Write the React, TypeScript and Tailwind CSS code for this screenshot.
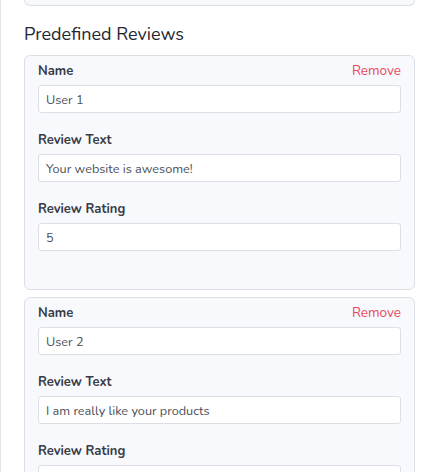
const reviews = [
  { name: "User 1", text: "Your website is awesome!", rating: "5" },
  { name: "User 2", text: "I am really like your products", rating: "" },
];

function Field({ label, value, remove }: { label: string; value: string; remove?: boolean }) {
  return (
    <div className="mb-[17px]">
      <div className="flex items-center justify-between h-5 mb-1">
        <span className="text-[13px] leading-5 font-bold text-[#373b46]">{label}</span>
        {remove && <span className="text-[13.5px] leading-5 text-[#e8485f] cursor-pointer">Remove</span>}
      </div>
      <input
        readOnly
        value={value}
        className="block w-full h-[28px] px-[7px] text-[12.7px] text-[#4b5059] bg-white border border-[#dcdfe5] rounded-[3px] outline-none"
      />
    </div>
  );
}

export default function App() {
  return (
    <div
      className="min-h-[472px] border-l border-[#e2e4e8] bg-white pl-[23px] pr-[19px] overflow-hidden"
      style={{ fontFamily: "Nunito, Lato, 'Noto Sans', sans-serif" }}
    >
      <div className="h-[6px] bg-[#f8f9fc] border border-t-0 border-[#dcdfe5] rounded-b-md" />
      <h2 className="mt-[14px] mb-[7px] text-[18px] leading-7 text-[#1f2633]">Predefined Reviews</h2>
      {reviews.map((r, i) => (
        <div
          key={i}
          className="mb-[7px] bg-[#f8f9fc] border border-[#dcdfe5] rounded-md px-[13px] pt-[5px] pb-[21px]"
        >
          <Field label="Name" value={r.name} remove />
          <Field label="Review Text" value={r.text} />
          <Field label="Review Rating" value={r.rating} />
        </div>
      ))}
    </div>
  );
}
